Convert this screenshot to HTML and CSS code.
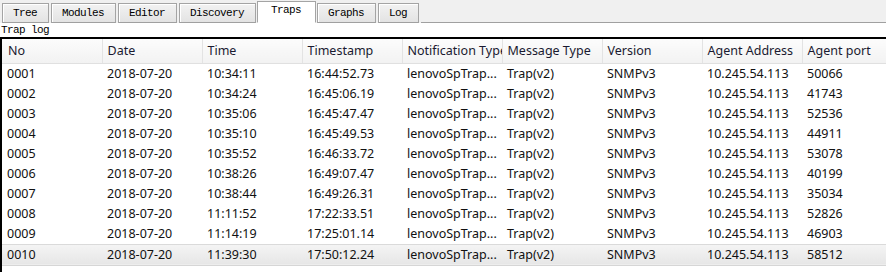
FILE: index.html
```html
<!DOCTYPE html>
<html>
<head>
<meta charset="utf-8">
<link rel="stylesheet" href="styles.css">
</head>
<body>
<div class="tabbar">
  <div class="tab">Tree</div>
  <div class="tab">Modules</div>
  <div class="tab">Editor</div>
  <div class="tab">Discovery</div>
  <div class="tab active">Traps</div>
  <div class="tab">Graphs</div>
  <div class="tab">Log</div>
  <div class="tabfill"></div>
</div>
<div class="panel">
  <div class="caption">Trap log</div>
  <div class="tablewrap">
    <table class="grid">
      <thead>
        <tr><th>No</th><th>Date</th><th>Time</th><th>Timestamp</th><th><span class="clip">Notification Type</span></th><th>Message Type</th><th>Version</th><th>Agent Address</th><th>Agent port</th></tr>
      </thead>
      <tbody>
        <tr><td>0001</td><td>2018-07-20</td><td>10:34:11</td><td>16:44:52.73</td><td>lenovoSpTrap...</td><td>Trap(v2)</td><td>SNMPv3</td><td>10.245.54.113</td><td>50066</td></tr>
        <tr><td>0002</td><td>2018-07-20</td><td>10:34:24</td><td>16:45:06.19</td><td>lenovoSpTrap...</td><td>Trap(v2)</td><td>SNMPv3</td><td>10.245.54.113</td><td>41743</td></tr>
        <tr><td>0003</td><td>2018-07-20</td><td>10:35:06</td><td>16:45:47.47</td><td>lenovoSpTrap...</td><td>Trap(v2)</td><td>SNMPv3</td><td>10.245.54.113</td><td>52536</td></tr>
        <tr><td>0004</td><td>2018-07-20</td><td>10:35:10</td><td>16:45:49.53</td><td>lenovoSpTrap...</td><td>Trap(v2)</td><td>SNMPv3</td><td>10.245.54.113</td><td>44911</td></tr>
        <tr><td>0005</td><td>2018-07-20</td><td>10:35:52</td><td>16:46:33.72</td><td>lenovoSpTrap...</td><td>Trap(v2)</td><td>SNMPv3</td><td>10.245.54.113</td><td>53078</td></tr>
        <tr><td>0006</td><td>2018-07-20</td><td>10:38:26</td><td>16:49:07.47</td><td>lenovoSpTrap...</td><td>Trap(v2)</td><td>SNMPv3</td><td>10.245.54.113</td><td>40199</td></tr>
        <tr><td>0007</td><td>2018-07-20</td><td>10:38:44</td><td>16:49:26.31</td><td>lenovoSpTrap...</td><td>Trap(v2)</td><td>SNMPv3</td><td>10.245.54.113</td><td>35034</td></tr>
        <tr><td>0008</td><td>2018-07-20</td><td>11:11:52</td><td>17:22:33.51</td><td>lenovoSpTrap...</td><td>Trap(v2)</td><td>SNMPv3</td><td>10.245.54.113</td><td>52826</td></tr>
        <tr><td>0009</td><td>2018-07-20</td><td>11:14:19</td><td>17:25:01.14</td><td>lenovoSpTrap...</td><td>Trap(v2)</td><td>SNMPv3</td><td>10.245.54.113</td><td>46903</td></tr>
        <tr class="selected"><td>0010</td><td>2018-07-20</td><td>11:39:30</td><td>17:50:12.24</td><td>lenovoSpTrap...</td><td>Trap(v2)</td><td>SNMPv3</td><td>10.245.54.113</td><td>58512</td></tr>
      </tbody>
    </table>
  </div>
</div>
</body>
</html>
```

FILE: styles.css
```css
html, body {
  margin: 0;
  padding: 0;
  background: #ffffff;
  overflow: hidden;
  width: 886px;
  height: 272px;
}

.tabbar {
  display: flex;
  align-items: flex-end;
  height: 23px;
  background: #f0f0f0;
  padding-left: 2px;
  box-sizing: border-box;
}

.tab {
  font-family: "Liberation Mono", "DejaVu Sans Mono", monospace;
  font-size: 11px;
  letter-spacing: -0.6px;
  color: #000;
  height: 18px;
  line-height: 18px;
  padding: 0 11px 0 10px;
  margin-right: 2px;
  border: 1px solid #a4a4a4;
  border-bottom: 1px solid #a0a0a0;
  box-shadow: inset 1px 1px 0 #ffffff;
  background: linear-gradient(#f2f2f2, #e3e3e3);
}

.tab.active {
  height: 20px;
  line-height: 17px;
  background: #ffffff;
  border-bottom: 1px solid #ffffff;
  box-shadow: none;
  margin-left: -1px;
  margin-right: 1px;
  padding: 0 14px 0 13px;
}

.tabfill {
  flex: 1;
  height: 0;
  border-bottom: 1px solid #a0a0a0;
}

.panel {
  background: #ffffff;
}

.caption {
  font-family: "Liberation Mono", "DejaVu Sans Mono", monospace;
  font-size: 11px;
  letter-spacing: -0.6px;
  height: 14px;
  line-height: 14px;
  padding-left: 1px;
  color: #000;
}

.tablewrap {
  border-top: 2px solid #000;
  border-left: 2px solid #000;
  height: 240px;
  overflow: hidden;
}

.grid {
  border-collapse: collapse;
  table-layout: fixed;
  width: 900px;
  font-family: "Noto Sans", "Open Sans", sans-serif;
  font-size: 12.5px;
  color: #111;
}

.grid th {
  width: 100px;
  box-sizing: border-box;
  height: 24px;
  padding: 0 0 0 5px;
  text-align: left;
  font-weight: normal;
  white-space: nowrap;
  overflow: hidden;
  color: #1a1a30;
  background: linear-gradient(#fcfcfc, #f2f2f2);
  border-right: 1px solid #e3e3e3;
  border-bottom: 1px solid #e0e0e0;
}

.grid th:first-child {
  padding-left: 6px;
}

.clip {
  display: block;
  width: 94px;
  overflow: hidden;
}

.grid td {
  height: 20px;
  padding: 0 0 0 5px;
  white-space: nowrap;
  overflow: hidden;
  line-height: 20px;
}

.grid tbody tr:first-child td {
  border-top: 1px solid #ffffff;
}

.grid tr.selected td {
  background: linear-gradient(#f4f4f4, #e6e6e6);
  border-top: 1px solid #dadada;
  border-bottom: 1px solid #d6d6d6;
}
```
